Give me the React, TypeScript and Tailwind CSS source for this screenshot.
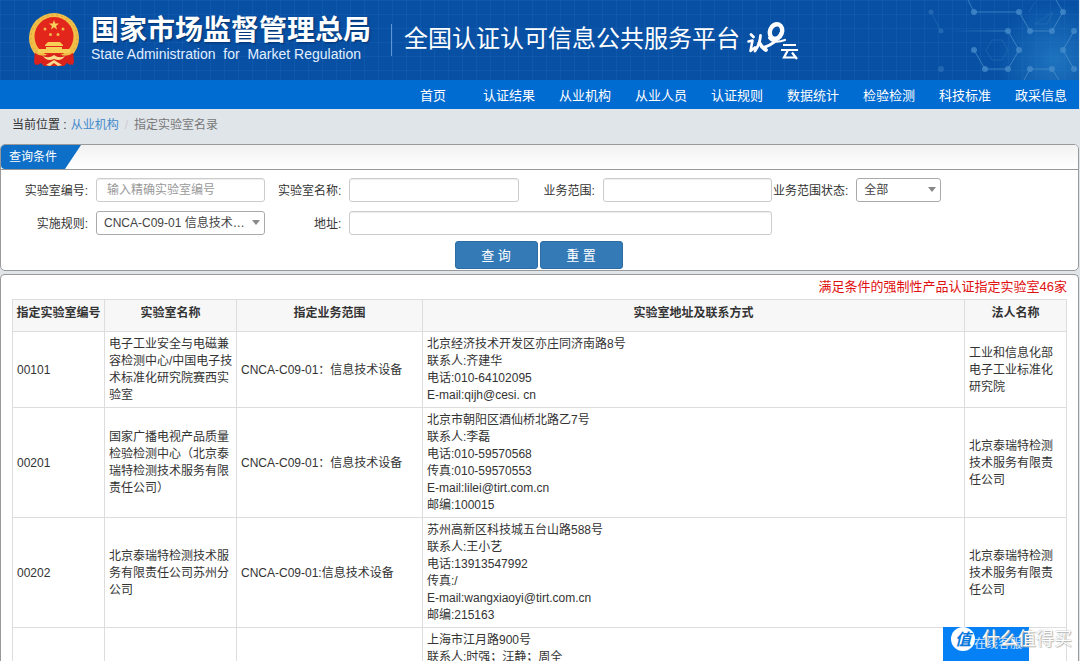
import React from 'react';

const navItems = ['首页', '认证结果', '从业机构', '从业人员', '认证规则', '数据统计', '检验检测', '科技标准', '政采信息'];

interface Lab {
  id: string;
  name: string;
  scope: string;
  contact: string[];
  legal: string;
}

const labs: Lab[] = [
  {
    id: '00101',
    name: '电子工业安全与电磁兼容检测中心/中国电子技术标准化研究院赛西实验室',
    scope: 'CNCA-C09-01：信息技术设备',
    contact: ['北京经济技术开发区亦庄同济南路8号', '联系人:齐建华', '电话:010-64102095', 'E-mail:qijh@cesi. cn'],
    legal: '工业和信息化部电子工业标准化研究院',
  },
  {
    id: '00201',
    name: '国家广播电视产品质量检验检测中心（北京泰瑞特检测技术服务有限责任公司）',
    scope: 'CNCA-C09-01：信息技术设备',
    contact: ['北京市朝阳区酒仙桥北路乙7号', '联系人:李磊', '电话:010-59570568', '传真:010-59570553', 'E-mail:lilei@tirt.com.cn', '邮编:100015'],
    legal: '北京泰瑞特检测技术服务有限责任公司',
  },
  {
    id: '00202',
    name: '北京泰瑞特检测技术服务有限责任公司苏州分公司',
    scope: 'CNCA-C09-01:信息技术设备',
    contact: ['苏州高新区科技城五台山路588号', '联系人:王小艺', '电话:13913547992', '传真:/', 'E-mail:wangxiaoyi@tirt.com.cn', '邮编:215163'],
    legal: '北京泰瑞特检测技术服务有限责任公司',
  },
  {
    id: '',
    name: '',
    scope: '',
    contact: ['上海市江月路900号', '联系人:时强；汪静；周全'],
    legal: '',
  },
];

function Emblem() {
  return (
    <svg className="h-[54px] w-[52px] shrink-0" viewBox="0 0 52 54" aria-hidden="true">
      <path d="M7 36 L6 50 L10 52 L13 50 L16 53 L36 53 L39 50 L42 52 L46 50 L45 36 Z" fill="#d9221c" />
      <circle cx="26" cy="25" r="25" fill="#f1bf48" />
      <circle cx="26" cy="25" r="23" fill="none" stroke="#d9a038" strokeWidth="1" strokeDasharray="2 3" />
      <circle cx="26" cy="23.5" r="19.5" fill="#e2261c" />
      <path d="M26 7 l1.2 3.6 3.8 0 -3 2.3 1.1 3.6 -3.1-2.2 -3.1 2.2 1.1-3.6 -3-2.3 3.8 0z" fill="#f8d45c" />
      <g fill="#f3b84a">
        <circle cx="17" cy="16" r="1.5" />
        <circle cx="35" cy="16" r="1.5" />
        <circle cx="22.5" cy="21.5" r="1.5" />
        <circle cx="30" cy="21.5" r="1.5" />
      </g>
      <path d="M20 29 h12 l3 3 v1 H17 v-1z M18 34 h16 v2 h8 v4 H10 v-4 h8z" fill="#f7cf57" />
      <path d="M7 40 Q14 45 21 41 H31 Q38 45 45 40 L45 52 L36 48 L31 53 H21 L16 48 L7 52 Z" fill="#d9221c" />
      <path d="M15 43 Q21 46 26 42 Q31 46 37 43 Q33 49 26 46 Q19 49 15 43z M18 52 L26 47 L34 52 L30 53 L26 50 L22 53z" fill="#f9dc8c" />
    </svg>
  );
}

function CloudLogo() {
  return (
    <svg className="ml-1.5 h-[40px] w-[54px] shrink-0" viewBox="0 0 54 40" role="img" aria-label="认e云" fill="none" stroke="#fff" strokeLinecap="round" strokeLinejoin="round">
      <path d="M5 14.5 L7.500 17" strokeWidth="2.8" />
      <path d="M2.500 21.5 L6.500 20.5 L4.500 31 L9 27.500" strokeWidth="2.6" />
      <path d="M14.500 15.500 Q14 24 9 31" strokeWidth="2.8" />
      <path d="M13.500 23 Q16 28 20 30" strokeWidth="3.8" />
      <ellipse cx="30" cy="11.500" rx="6" ry="7.500" transform="rotate(22 30 11.5)" strokeWidth="4.4" />
      <path d="M35 13 Q31 23 18 27.500" strokeWidth="3" />
      <path d="M23 18 Q27 24 39 20" strokeWidth="2.2" />
      <g strokeWidth="2.2" strokeLinecap="butt" strokeLinejoin="miter">
        <path d="M37 25 H50 M35 30 H52 M42 30 L38 37.500 H50 M46 32.500 L51 39" />
      </g>
    </svg>
  );
}

function Molecules() {
  const dots = [[47, 12], [92, 12], [136, 12], [103, 31], [125, 31], [81, 31], [147, 31], [47, 50], [92, 50], [136, 50], [58, 69], [81, 69], [103, 69], [125, 69], [147, 69]];
  return (
    <svg className="absolute right-0 top-0 h-20 w-[152px]" viewBox="0 0 152 80" aria-hidden="true">
      <defs>
        <radialGradient id="glow">
          <stop offset="0" stopColor="#2a86cc" stopOpacity=".65" />
          <stop offset="1" stopColor="#2a86cc" stopOpacity="0" />
        </radialGradient>
        <linearGradient id="fade" x1="20" x2="81" y1="0" y2="0" gradientUnits="userSpaceOnUse">
          <stop offset="0" stopColor="#5596cf" stopOpacity="0" />
          <stop offset="1" stopColor="#5596cf" />
        </linearGradient>
      </defs>
      <circle cx="128" cy="60" r="60" fill="url(#glow)" />
      <g fill="none" stroke="#5596cf" strokeOpacity=".65">
        <path d="M41 0 L47 12 H92 L103 31 H125 L136 12 L129 0" />
        <path d="M81 31 L92 50 L81 69 H58 L47 50" />
        <path d="M147 31 L136 50 L147 69 M97 80 L103 69 H125 L132 80" />
      </g>
      <path d="M20 30.500 H81 V31.500 H20z" fill="url(#fade)" fillOpacity=".65" />
      <g stroke="#3b7dbd" strokeOpacity=".35" fill="none">
        <path d="M59 50 L65 40 H75 L81 50 L75 60 H65Z M102 12 L108 2 M126 12 L120 24 H108Z M4 12 L14 31" />
      </g>
      {dots.map(([x, y]) => (
        <circle key={`${x}-${y}`} cx={x} cy={y} r="3" fill="#4389c9" fillOpacity=".8" />
      ))}
      <g fill="#2e70b8" fillOpacity=".7">
        <circle cx="4" cy="12" r="2.5" />
        <circle cx="14" cy="31" r="2.5" />
        <circle cx="14" cy="69" r="3" />
      </g>
    </svg>
  );
}

function Caret() {
  return (
    <svg className="pointer-events-none absolute right-[5px] top-[9px] h-[5px] w-2" viewBox="0 0 8 5" aria-hidden="true">
      <path d="M0 0 H8 L4 5Z" fill="#888" />
    </svg>
  );
}

const label = 'pt-[5px] pr-2 text-right whitespace-nowrap';
const field = 'h-6 w-full min-w-0 rounded-[3px] border border-[#ccc] bg-white px-[10px] text-xs text-[#444] shadow-[inset_0_1px_1px_rgba(0,0,0,0.075)] placeholder:text-[#999]';
const select = 'h-6 w-full appearance-none rounded-[3px] border border-[#aaa] bg-white pl-[7px] pr-3.5 text-xs text-[#444] text-ellipsis';
const button = 'h-7 w-[83px] rounded-[3px] border border-[#2e6da4] bg-[#337ab7] text-[13px] text-white';
const cell = 'border border-[#ddd] pt-1 pb-[3px] pl-1';

export default function App() {
  return (
    <div className="relative flex h-screen flex-col overflow-hidden bg-[#e0e5ea] pr-px text-xs leading-[17px] text-[#333] [font-family:'Liberation_Sans','Noto_Sans_CJK_SC',sans-serif]">
      <header className="relative flex h-20 shrink-0 items-center bg-[#0750a4] bg-[linear-gradient(rgba(70,140,220,0.12)_1px,transparent_1px),linear-gradient(90deg,rgba(70,140,220,0.12)_1px,transparent_1px)] bg-[size:14px_14px] pl-7 text-white">
        <Molecules />
        <Emblem />
        <div className="ml-[11px] pb-1 whitespace-nowrap">
          <h1 className="text-[28px] leading-[32px] font-bold [text-shadow:1px_1px_2px_#03306b]">国家市场监督管理总局</h1>
          <p className="text-[14px] leading-[14px] text-[#e2efff]">State Administration &nbsp;for &nbsp;Market Regulation</p>
        </div>
        <div className="ml-5 h-8 w-px bg-[#5f97d2]" />
        <div className="ml-3 pb-0.5 text-[24px] leading-[32px] whitespace-nowrap">全国认证认可信息公共服务平台</div>
        <CloudLogo />
      </header>

      <nav className="flex h-[29px] shrink-0 items-center justify-end bg-[#006bd0] pt-0.5 pr-3 text-[13px] text-white">
        {navItems.map((item) => (
          <a key={item} href="#" className="ml-6 w-[52px] text-center whitespace-nowrap">{item}</a>
        ))}
      </nav>

      <div className="flex h-[35px] shrink-0 items-center pb-0.5 pl-3">
        <span>当前位置 :</span>
        <a href="#" className="ml-1 text-[#428bca]">从业机构</a>
        <span className="mx-1.5 text-[#ccc]">/</span>
        <span className="text-[#777]">指定实验室名录</span>
      </div>

      <section className="shrink-0 overflow-hidden rounded-[5px] border border-[#999] bg-white">
        <div className="h-[25px] border-b border-[#999] bg-linear-to-b from-[#f2f2f2] to-white">
          <h2 className="flex h-6 w-20 items-center rounded-bl-[4px] bg-[#0d6fc8] pl-2 text-white [clip-path:polygon(0_0,100%_0,80%_100%,0_100%)]">查询条件</h2>
        </div>
        <form className="pt-2" onSubmit={(e) => e.preventDefault()}>
          <div className="grid grid-cols-[95px_minmax(0,2fr)_84px_minmax(0,2fr)_84px_minmax(0,2fr)_84px_minmax(0,1fr)] gap-y-[9px] pr-[137px]">
            <label htmlFor="lab-no" className={label}>实验室编号:</label>
            <input id="lab-no" className={field} placeholder="输入精确实验室编号" />
            <label htmlFor="lab-name" className={label}>实验室名称:</label>
            <input id="lab-name" className={field} />
            <label htmlFor="scope" className={label}>业务范围:</label>
            <input id="scope" className={field} />
            <label htmlFor="state" className={label}>业务范围状态:</label>
            <div className="relative">
              <select id="state" className={select}><option>全部</option></select>
              <Caret />
            </div>
            <label htmlFor="rule" className={label}>实施规则:</label>
            <div className="relative">
              <select id="rule" className={select}><option>CNCA-C09-01 信息技术…</option></select>
              <Caret />
            </div>
            <label htmlFor="address" className={label}>地址:</label>
            <input id="address" className={`${field} col-span-3`} />
          </div>
          <div className="mt-1.5 flex justify-center gap-0.5 pr-0.5 pb-px">
            <button type="submit" className={button}>查 询</button>
            <button type="reset" className={button}>重 置</button>
          </div>
        </form>
      </section>

      <section className="mt-[3px] grow rounded-t-[5px] border border-b-0 border-[#999] bg-white px-[11px] pt-[3px]">
        <p className="h-[21px] text-right text-[13px] text-[#e01010]">满足条件的强制性产品认证指定实验室46家</p>
        <table className="w-full table-fixed border-collapse">
          <colgroup>
            <col className="w-[92px]" />
            <col className="w-[132px]" />
            <col className="w-[186px]" />
            <col />
            <col className="w-[102px]" />
          </colgroup>
          <thead>
            <tr className="h-8 bg-[#f7f7f7]">
              {['指定实验室编号', '实验室名称', '指定业务范围', '实验室地址及联系方式', '法人名称'].map((h) => (
                <th key={h} className="border border-[#ddd] pb-1 text-center font-bold whitespace-nowrap">{h}</th>
              ))}
            </tr>
          </thead>
          <tbody>
            {labs.map((lab, i) => (
              <tr key={i}>
                <td className={cell}>{lab.id}</td>
                <td className={cell}>{lab.name}</td>
                <td className={cell}>{lab.scope}</td>
                <td className={cell}>{lab.contact.map((line) => <div key={line}>{line}</div>)}</td>
                <td className={`${cell} pr-2`}>{lab.legal}</td>
              </tr>
            ))}
          </tbody>
        </table>
      </section>

      <button type="button" className="absolute right-[51px] bottom-0 h-[34px] w-[86px] bg-[#0580f5] pl-6 text-xs text-white/80">在线客服</button>
      <div className="pointer-events-none absolute right-2 bottom-[10px] flex items-center gap-[7px] whitespace-nowrap">
        <span className="flex size-6 items-center justify-center rounded-full bg-white text-[16px] font-bold text-[#0878dc] italic">值</span>
        <span className="text-[18px] leading-6 text-white [text-shadow:0_0_1px_#999,1px_1px_1px_#bbb]">什么值得买</span>
      </div>
    </div>
  );
}
